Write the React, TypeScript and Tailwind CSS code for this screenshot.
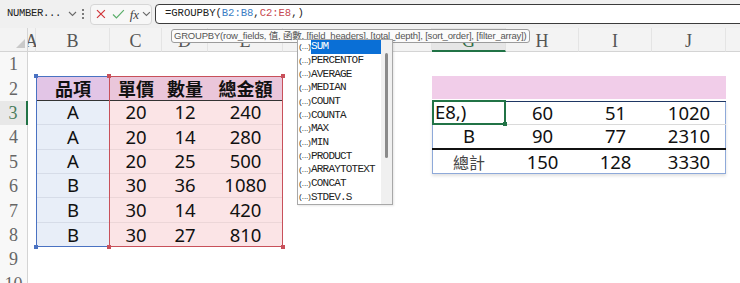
import React from "react";

const SANS = "font-['Noto_Sans','Noto_Sans_CJK_TC',sans-serif]";
const CJK = "font-['Noto_Sans_CJK_TC','Noto_Sans',sans-serif]";
const SERIF = "font-['Liberation_Serif',serif]";
const MONO = "font-['Liberation_Mono',monospace]";

const COL = ["", "col-start-1", "col-start-2", "col-start-3", "col-start-4", "col-start-5", "col-start-6", "col-start-7", "col-start-8", "col-start-9", "col-start-10", "col-start-11", "col-start-12"];
const ROW = ["", "row-start-1", "row-start-2", "row-start-3", "row-start-4", "row-start-5", "row-start-6", "row-start-7", "row-start-8", "row-start-9", "row-start-10", "row-start-11"];

function Chevron({ className = "" }: { className?: string }) {
  return (
    <svg width="9" height="6" viewBox="0 0 9 6" className={className}>
      <path d="M1 1 L4.5 4.5 L8 1" fill="none" stroke="#6a6a6a" strokeWidth="1.1" />
    </svg>
  );
}

function FormulaBar() {
  return (
    <div className="flex h-[28px] items-center bg-[#f0f0f0]">
      <div className="ml-[4px] flex h-[20px] w-[74px] items-center">
        <span className={`${MONO} pl-[3px] text-[10.5px] tracking-[-0.3px] text-[#222]`}>NUMBER...</span>
        <Chevron className="ml-[7px]" />
      </div>
      <svg width="4" height="12" viewBox="0 0 4 12" className="ml-[3px]">
        <circle cx="2" cy="2" r="1" fill="#555" />
        <circle cx="2" cy="6" r="1" fill="#555" />
        <circle cx="2" cy="10" r="1" fill="#555" />
      </svg>
      <div className="ml-[5px] flex h-[21px] w-[62px] items-center rounded-[4px] border border-[#d6d6d6] bg-[#f7f7f7]">
        <svg width="10" height="10" viewBox="0 0 10 10" className="ml-[5px]">
          <path d="M1 1 L9 9 M9 1 L1 9" stroke="#d13438" strokeWidth="1.2" />
        </svg>
        <svg width="13" height="10" viewBox="0 0 13 10" className="ml-[6px]">
          <path d="M1 5.5 L4.5 9 L12 1" fill="none" stroke="#5aae6a" strokeWidth="1.2" />
        </svg>
        <span className={`${SERIF} ml-[5px] text-[13px] italic leading-none text-[#444]`}>fx</span>
        <Chevron className="ml-[3px]" />
      </div>
      <div className="-mr-[10px] ml-[3px] flex h-[20px] flex-1 items-center rounded-[4px] border-[1.5px] border-[#3c3c3c] bg-white">
        <span className={`${MONO} pl-[9px] text-[10.6px] font-medium tracking-[-0.05px] text-[#222]`}>
          =GROUPBY(<span className="text-[#3b7dc4]">B2:B8</span>,<span className="text-[#c74950]">C2:E8</span>,)
        </span>
      </div>
    </div>
  );
}

function Handle({ className }: { className: string }) {
  return <div className={`absolute h-[4px] w-[4px] ${className}`} />;
}

const LEFT = [
  ["A", "20", "12", "240"],
  ["A", "20", "14", "280"],
  ["A", "20", "25", "500"],
  ["B", "30", "36", "1080"],
  ["B", "30", "14", "420"],
  ["B", "30", "27", "810"],
];

function Sheet() {
  const letters = ["A", "B", "C", "D", "E", "F", "G", "H", "I", "J", ""];
  return (
    <div className="grid grid-cols-[28px_8px_74px_52px_46px_75px_149px_74px_73px_73px_74px_74px] grid-rows-[24px_repeat(10,24.4px)]">
      {/* corner */}
      <div className="relative col-start-1 row-start-1 border-b border-r border-[#d4d4d4] bg-[#f3f3f3]">
        <svg width="10" height="10" viewBox="0 0 10 10" className="absolute bottom-[3px] right-[1px]">
          <path d="M0 10 L9 1 L9 10 Z" fill="#c9c9c9" />
        </svg>
      </div>
      {/* column letters */}
      {letters.map((l, i) => {
        const c = i + 2;
        const sel = l === "G";
        return (
          <div
            key={"h" + i}
            className={`${COL[c]} row-start-1 flex items-center justify-center overflow-visible whitespace-nowrap pt-[3px] ${SERIF} text-[18px] leading-none ${
              sel
                ? "border-b-2 border-r border-b-[#217346] border-r-[#e2e2e2] bg-[#e6e6e6] text-[#2f6b45]"
                : "border-b border-r border-b-[#d4d4d4] border-r-[#e4e4e4] bg-[#f3f3f3] text-[#555]"
            }`}
          >
            {l}
          </div>
        );
      })}
      {/* row numbers */}
      {[1, 2, 3, 4, 5, 6, 7, 8, 9, 10].map((n) => (
        <div
          key={"r" + n}
          className={`col-start-1 ${ROW[n + 1]} flex items-center justify-center ${SERIF} text-[18px] leading-none ${
            n === 3
              ? "border-r-2 border-r-[#217346] bg-[#e8e8e8] text-[#4b7d5c]"
              : "border-r border-r-[#d4d4d4] bg-[#f8f8f8] text-[#666]"
          }`}
        >
          {n}
        </div>
      ))}

      {/* left table header */}
      <div className={`col-start-3 row-start-3 flex items-center justify-center border-b-[1.5px] border-b-[#333] bg-[#e2c5e6] ${CJK} text-[18px] font-bold text-[#111]`}>品項</div>
      <div className={`col-start-4 row-start-3 flex items-center justify-center border-b-[1.5px] border-b-[#333] bg-[#eac6da] ${CJK} text-[18px] font-bold text-[#111]`}>單價</div>
      <div className={`col-start-5 row-start-3 flex items-center justify-center border-b-[1.5px] border-b-[#333] bg-[#eac6da] ${CJK} text-[18px] font-bold text-[#111]`}>數量</div>
      <div className={`col-start-6 row-start-3 flex items-center justify-center border-b-[1.5px] border-b-[#333] bg-[#eac6da] ${CJK} text-[18px] font-bold text-[#111]`}>總金額</div>

      {LEFT.map((r, i) => {
        const gr = ROW[i + 4];
        const pinkCell = `flex items-center justify-center bg-[#fbe4e6] ${SANS} text-[18.5px] leading-none text-[#111] ${i < 5 ? "border-b border-b-[#ecd6d8]" : ""}`;
        return (
          <React.Fragment key={"l" + i}>
            <div className={`col-start-3 ${gr} flex items-center justify-center bg-[#e8eef8] ${SANS} text-[18.5px] leading-none text-[#111] ${i < 5 ? "border-b border-b-[#d6dce8]" : ""}`}>{r[0]}</div>
            <div className={`col-start-4 ${gr} ${pinkCell}`}>{r[1]}</div>
            <div className={`col-start-5 ${gr} ${pinkCell}`}>{r[2]}</div>
            <div className={`col-start-6 ${gr} ${pinkCell}`}>{r[3]}</div>
          </React.Fragment>
        );
      })}

      {/* selection outlines */}
      <div className="relative col-start-3 row-start-3 row-span-7 border-[1.5px] border-[#4a72c2]">
        <Handle className="-left-[3px] -top-[3px] bg-[#4a72c2]" />
        <Handle className="-bottom-[3px] -left-[3px] bg-[#4a72c2]" />
      </div>
      <div className="relative col-start-4 col-span-3 row-start-3 row-span-7 -ml-[1px] border-[1.5px] border-[#c8505a]">
        <Handle className="-left-[3px] -top-[3px] bg-[#c8505a]" />
        <Handle className="-right-[3px] -top-[3px] bg-[#c8505a]" />
        <Handle className="-bottom-[3px] -left-[3px] bg-[#c8505a]" />
        <Handle className="-bottom-[3px] -right-[3px] bg-[#c8505a]" />
      </div>

      {/* right table */}
      <div className="col-start-8 col-span-4 row-start-3 mb-[2px] bg-[#f1cde9]" />

      <div className="col-start-8 col-span-4 row-start-4 row-span-3 border border-[#8ea9d9] shadow-[0_2px_3px_rgba(0,0,0,0.12)]" />

      <div className={`col-start-8 row-start-4 flex items-center border-b border-b-[#dadada] pl-[3px] ${SANS} text-[18.5px] leading-none text-[#111]`}>E8,)</div>
      <div className={`col-start-9 row-start-4 flex items-center justify-center border-b border-t border-b-[#dadada] border-t-[#1f3764] ${SANS} text-[18.5px] leading-none text-[#111]`}>60</div>
      <div className={`col-start-10 row-start-4 flex items-center justify-center border-b border-t border-b-[#dadada] border-t-[#1f3764] ${SANS} text-[18.5px] leading-none text-[#111]`}>51</div>
      <div className={`col-start-11 row-start-4 flex items-center justify-center border-b border-t border-b-[#dadada] border-t-[#1f3764] ${SANS} text-[18.5px] leading-none text-[#111]`}>1020</div>

      <div className={`col-start-8 row-start-5 flex items-center justify-center border-b-2 border-b-[#111] ${SANS} text-[18.5px] leading-none text-[#111]`}>B</div>
      <div className={`col-start-9 row-start-5 flex items-center justify-center border-b-2 border-b-[#111] ${SANS} text-[18.5px] leading-none text-[#111]`}>90</div>
      <div className={`col-start-10 row-start-5 flex items-center justify-center border-b-2 border-b-[#111] ${SANS} text-[18.5px] leading-none text-[#111]`}>77</div>
      <div className={`col-start-11 row-start-5 flex items-center justify-center border-b-2 border-b-[#111] ${SANS} text-[18.5px] leading-none text-[#111]`}>2310</div>

      <div className={`col-start-8 row-start-6 flex items-center justify-center ${CJK} text-[16px] leading-none text-[#444]`}>總計</div>
      <div className={`col-start-9 row-start-6 flex items-center justify-center ${SANS} text-[18.5px] leading-none text-[#111]`}>150</div>
      <div className={`col-start-10 row-start-6 flex items-center justify-center ${SANS} text-[18.5px] leading-none text-[#111]`}>128</div>
      <div className={`col-start-11 row-start-6 flex items-center justify-center ${SANS} text-[18.5px] leading-none text-[#111]`}>3330</div>

      {/* active cell */}
      <div className="relative col-start-8 row-start-4 -mt-[1px] border-2 border-[#217346]">
        <Handle className="-bottom-[3px] -right-[3px] bg-[#217346]" />
      </div>
    </div>
  );
}

function Tooltip() {
  return (
    <div className="absolute left-[171px] top-[29px] flex h-[14px] items-center rounded-[3px] border border-[#9c9c9c] bg-[#fbfbfb] px-[2px]">
      <span className={`font-['Liberation_Sans','Noto_Sans_CJK_TC',sans-serif] whitespace-nowrap text-[9.5px] leading-none tracking-[-0.2px] text-[#555]`}>
        GROUPBY(row_fields, 值, 函數, [field_headers], [total_depth], [sort_order], [filter_array])
      </span>
    </div>
  );
}

const ITEMS = ["SUM", "PERCENTOF", "AVERAGE", "MEDIAN", "COUNT", "COUNTA", "MAX", "MIN", "PRODUCT", "ARRAYTOTEXT", "CONCAT", "STDEV.S"];

function Dropdown() {
  return (
    <div className="absolute left-[297px] top-[39px] flex h-[166px] w-[96px] border border-[#a8a8a8] bg-white shadow-[1px_1px_2px_rgba(0,0,0,0.1)]">
      <div className="flex flex-1 flex-col">
        {ITEMS.map((it, i) => (
          <div key={it} className="flex h-[13.7px] items-center">
            <span className="w-[13px] shrink-0 pl-[1px] font-['Liberation_Sans',sans-serif] text-[8px] leading-none text-[#222]">(...)</span>
            <span
              className={`${MONO} flex h-full flex-1 items-center text-[11px] leading-none tracking-[-0.8px] ${
                i === 0 ? "bg-[#0a6fd6] text-white" : "text-[#222]"
              }`}
            >
              {it}
            </span>
          </div>
        ))}
      </div>
      <div className="flex w-[11px] justify-center bg-[#f0f0f0]">
        <div className="mt-[13px] h-[105px] w-[3px] rounded-full bg-[#8a8a8a]" />
      </div>
    </div>
  );
}

export default function App() {
  return (
    <div className="relative h-[283px] w-[740px] overflow-hidden bg-white">
      <FormulaBar />
      <Sheet />
      <Tooltip />
      <Dropdown />
    </div>
  );
}
